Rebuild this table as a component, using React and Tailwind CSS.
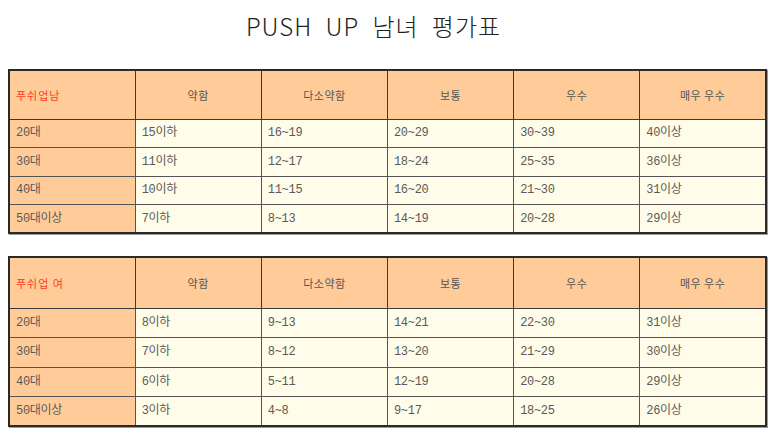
import React from "react";

const cols = ["약함", "다소약함", "보통", "우수", "매우 우수"];

const men = [
  ["20대", "15이하", "16~19", "20~29", "30~39", "40이상"],
  ["30대", "11이하", "12~17", "18~24", "25~35", "36이상"],
  ["40대", "10이하", "11~15", "16~20", "21~30", "31이상"],
  ["50대이상", "7이하", "8~13", "14~19", "20~28", "29이상"],
];

const women = [
  ["20대", "8이하", "9~13", "14~21", "22~30", "31이상"],
  ["30대", "7이하", "8~12", "13~20", "21~29", "30이상"],
  ["40대", "6이하", "5~11", "12~19", "20~28", "29이상"],
  ["50대이상", "3이하", "4~8", "9~17", "18~25", "26이상"],
];

function Table({ label, rows, headH, rowH }) {
  return (
    <table className="ml-2 w-[759px] table-fixed border-collapse border-2 border-[#2a2a2a] shadow-[1px_1px_0_#9a9a9a] text-[12px] text-[#5a5a5a] font-['Liberation_Mono','Noto_Sans_CJK_KR',monospace]">
      <tbody>
        <tr className={headH}>
          <td className="border border-[#3a3a3a] bg-[#ffcc99] pl-[6px] text-[#ff3b1f] font-['Noto_Sans_CJK_KR',sans-serif] text-[11px] tracking-[1px]">
            {label}
          </td>
          {cols.map((c) => (
            <td
              key={c}
              className="border border-[#3a3a3a] bg-[#ffcc99] text-center font-['Noto_Sans_CJK_KR',sans-serif] text-[11px] tracking-[0.5px] text-[#555]"
            >
              {c}
            </td>
          ))}
        </tr>
        {rows.map((r) => (
          <tr key={r[0]} className={rowH}>
            {r.map((v, i) => (
              <td
                key={i}
                className={
                  "border border-[#555] pl-[6px] whitespace-nowrap tracking-[-0.3px] " +
                  (i === 0 ? "bg-[#ffcc99]" : "bg-[#fffde9]")
                }
              >
                {v}
              </td>
            ))}
          </tr>
        ))}
      </tbody>
    </table>
  );
}

export default function App() {
  return (
    <div className="w-[773px] h-[437px] bg-white overflow-hidden">
      <div className="h-[69px] pt-[8px] pr-[26px] text-center text-[24px] tracking-[1px] text-[#222] font-['Noto_Sans_CJK_KR',sans-serif] font-light [word-spacing:7px]">
        PUSH UP 남녀 평가표
      </div>
      <Table label="푸쉬업남" rows={men} headH="h-[49px]" rowH="h-[28.5px]" />
      <div className="h-[22px]" />
      <Table label="푸쉬업 여" rows={women} headH="h-[51px]" rowH="h-[29.5px]" />
    </div>
  );
}
